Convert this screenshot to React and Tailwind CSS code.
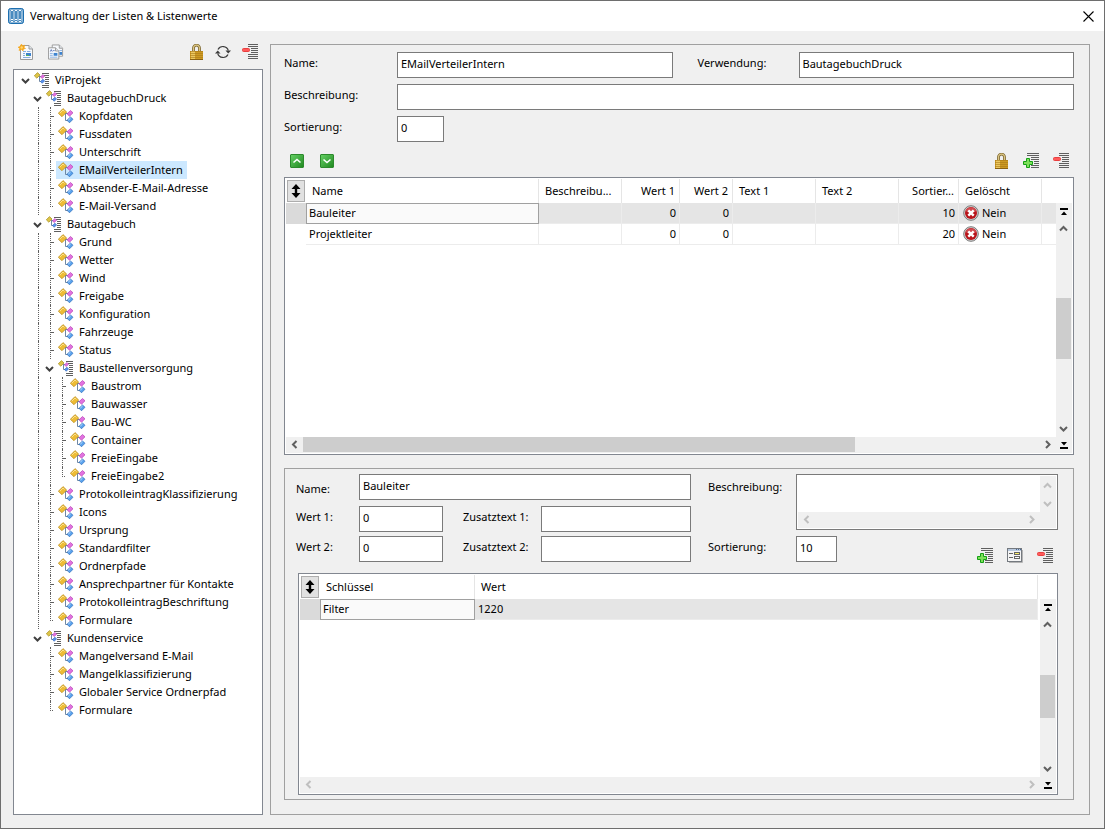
/**
 * App.jsx
 * Dialog "Verwaltung der Listen & Listenwerte": Baum links, Listendetails rechts.
 */

import { useState } from 'react';

const TREE = {
  label: 'ViProjekt',
  children: [
    {
      label: 'BautagebuchDruck',
      children: [
        { label: 'Kopfdaten' },
        { label: 'Fussdaten' },
        { label: 'Unterschrift' },
        { label: 'EMailVerteilerIntern' },
        { label: 'Absender-E-Mail-Adresse' },
        { label: 'E-Mail-Versand' },
      ],
    },
    {
      label: 'Bautagebuch',
      children: [
        { label: 'Grund' },
        { label: 'Wetter' },
        { label: 'Wind' },
        { label: 'Freigabe' },
        { label: 'Konfiguration' },
        { label: 'Fahrzeuge' },
        { label: 'Status' },
        {
          label: 'Baustellenversorgung',
          children: [
            { label: 'Baustrom' },
            { label: 'Bauwasser' },
            { label: 'Bau-WC' },
            { label: 'Container' },
            { label: 'FreieEingabe' },
            { label: 'FreieEingabe2' },
          ],
        },
        { label: 'ProtokolleintragKlassifizierung' },
        { label: 'Icons' },
        { label: 'Ursprung' },
        { label: 'Standardfilter' },
        { label: 'Ordnerpfade' },
        { label: 'Ansprechpartner für Kontakte' },
        { label: 'ProtokolleintragBeschriftung' },
        { label: 'Formulare' },
      ],
    },
    {
      label: 'Kundenservice',
      children: [
        { label: 'Mangelversand E-Mail' },
        { label: 'Mangelklassifizierung' },
        { label: 'Globaler Service Ordnerpfad' },
        { label: 'Formulare' },
      ],
    },
  ],
};

const COLUMNS = [
  { label: 'Name',          width: '' },
  { label: 'Beschreibu...', width: 'w-[83px]' },
  { label: 'Wert 1',        width: 'w-[58px]', right: true },
  { label: 'Wert 2',        width: 'w-[53px]', right: true },
  { label: 'Text 1',        width: 'w-[83px]' },
  { label: 'Text 2',        width: 'w-[83px]' },
  { label: 'Sortier...',    width: 'w-[60px]', right: true },
  { label: 'Gelöscht',      width: 'w-[83px]' },
];

const ROWS = [
  { name: 'Bauleiter',     wert1: 0, wert2: 0, sort: 10 },
  { name: 'Projektleiter', wert1: 0, wert2: 0, sort: 20 },
];

/* ── Icons ── */

function AppIcon() {
  return (
    <svg width="16" height="16" viewBox="0 0 16 16">
      <rect x="0.5" y="0.5" width="15" height="15" rx="2" fill="#1d6fb0" stroke="#1d6fb0" />
      <rect x="1.5" y="1.5" width="13" height="13" rx="1" fill="none" stroke="#ffffff" strokeWidth="0.5" />
      {[3, 7, 11].map(x => (
        <g key={x}>
          <rect x={x - 0.5} y="2" width="3" height="12" rx="1" fill="#ffffff" />
          <rect x={x + 0.2} y="3" width="1.6" height="8" fill="#1d6fb0" />
          <rect x={x + 0.2} y="12" width="1.6" height="1" fill="#1d6fb0" />
        </g>
      ))}
    </svg>
  );
}

function NewDocIcon() {
  return (
    <svg width="16" height="16" viewBox="0 0 16 16">
      <path d="M2.5 1.5H11L14.5 5V15.5H2.5Z" fill="#f7f9fc" stroke="#9a9a9a" />
      <path d="M11 1.5V5H14.5" fill="#dfe4ea" stroke="#9a9a9a" />
      <path d="M5 7.5H8M9 7.5H12.5M5 9.5H7M5 11.5H7M5 13.5H12.5" stroke="#86aede" />
      <rect x="8" y="9" width="5" height="3" fill="#3d83cf" />
      <rect x="8" y="11" width="3" height="1" fill="#59b259" />
      <path d="M3.5 0L4.5 2L6.8 1.2L6 3.5L7.5 4.5L5.5 5L5 7L3.5 5.5L1 6.5L1.8 4.3L0 3.2L2 2.5Z" fill="#f7a81c" stroke="#f7a81c" strokeWidth="0.6" />
      <circle cx="3.7" cy="3.5" r="1.2" fill="#ffd873" />
    </svg>
  );
}

function CopyDocIcon() {
  return (
    <svg width="17" height="16" viewBox="0 0 17 16">
      <path d="M4.5 0.5H12L15.5 4V12.5H4.5Z" fill="#f7f9fc" stroke="#9a9a9a" />
      <path d="M12 0.5V4H15.5" fill="#dfe4ea" stroke="#9a9a9a" />
      <rect x="12" y="6" width="3" height="1" fill="#86aede" />
      <rect x="12" y="8" width="3" height="3" fill="#3d83cf" />
      <path d="M0.5 3.5H8L11.5 7V15.5H0.5Z" fill="#f7f9fc" stroke="#9a9a9a" />
      <path d="M8 3.5V7H11.5" fill="#dfe4ea" stroke="#9a9a9a" />
      <path d="M2.5 7.5L3.5 5.5L4.5 7.5M5.5 6.5H7" fill="none" stroke="#4d6cb5" />
      <path d="M2 9.5H5M2 11.5H5M2 13.5H10" stroke="#86aede" />
      <rect x="6" y="9" width="4" height="3" fill="#3d83cf" />
    </svg>
  );
}

function LockIcon() {
  return (
    <svg width="16" height="16" viewBox="0 0 16 16">
      <path d="M5.5 8V4.3A3 3.2 0 0 1 11.5 4.3V8" fill="none" stroke="#7d672f" strokeWidth="2.8" />
      <path d="M5.5 8V4.3A3 3.2 0 0 1 11.5 4.3V8" fill="none" stroke="#dcc684" strokeWidth="1.2" />
      <rect x="2" y="7" width="13" height="9" fill="#cd9a22" />
      <rect x="3" y="7" width="4" height="9" fill="#ecc860" />
      <path d="M2 7.5H15M2 9.5H15M2 11.5H15M2 13.5H15" stroke="#a87718" strokeWidth="0.6" />
      <path d="M2 15.5H15" stroke="#8a6113" />
    </svg>
  );
}

function RefreshIcon() {
  return (
    <svg width="16" height="16" viewBox="0 0 16 16">
      <path d="M3 5.5A5.6 5.6 0 0 1 13.3 6.5M13 10.5A5.6 5.6 0 0 1 2.700 9.500" fill="none" stroke="#3c3c3c" strokeWidth="1.200" />
      <path d="M10.500 6.500H16L13.200 9.500Z" fill="#3c3c3c" />
      <path d="M0 9.500H5.500L2.800 6.500Z" fill="#3c3c3c" />
    </svg>
  );
}

function RemoveIcon() {
  return (
    <svg width="16" height="16" viewBox="0 0 16 16">
      <path
        d="M6 0.5H16M6 2.5H16M9 4.5H16M9 6.5H16M9 8.5H16M6 10.5H16M6 12.5H16M6 14.5H16"
        stroke="#5f5f5f"
      />
      <rect x="0.5" y="4.5" width="7" height="3" rx="1" fill="#ff5a5a" stroke="#e84040" />
    </svg>
  );
}

function AddIcon() {
  return (
    <svg width="16" height="16" viewBox="0 0 16 16">
      <path
        d="M4 0.5H16M4 2.5H16M8 4.5H16M8 6.5H16M11 8.5H16M11 10.5H16M8 12.5H16M8 14.5H16"
        stroke="#5f5f5f"
      />
      <path
        d="M3.5 5.5H6.5V8.5H9.5V11.5H6.5V14.5H3.5V11.5H0.5V8.5H3.5Z"
        fill="#7ee05a" stroke="#14a014" strokeLinejoin="round"
      />
    </svg>
  );
}

function FormIcon() {
  return (
    <svg width="16" height="16" viewBox="0 0 16 16">
      <path d="M2 14.5H15.5V2" fill="none" stroke="#b4b4b4" />
      <rect x="0.5" y="0.5" width="14" height="13" fill="#f5f5f5" stroke="#74797f" />
      <rect x="1" y="1" width="13" height="2" fill="#b9c9de" />
      <path d="M9 1.5H10M11 1.5H12M13 1.5H14" stroke="#4d6a94" />
      <path d="M2 5.5H6M2 9.5H6" stroke="#666" />
      <rect x="7.5" y="4.5" width="5" height="2" fill="#fff26b" stroke="#666" />
      <rect x="7.5" y="8.5" width="5" height="2" fill="#fff" stroke="#666" />
    </svg>
  );
}

function LeafIcon() {
  return (
    <svg width="16" height="16" viewBox="0 0 16 16">
      <path d="M7 5.5H10M7.5 5.5V12.5H10" fill="none" stroke="#6f87a3" />
      <path d="M0.3 5.3L5 0.6L8.7 4L4 8.7Z" fill="#eebc35" stroke="#b78a1c" strokeWidth="0.7" />
      <path d="M1.8 5.2L5 2L6.5 3.4" fill="none" stroke="#fbe38f" />
      <path d="M9 5.8L12.5 2.5L15 4.8L11.5 8.2Z" fill="#e272e0" stroke="#b440b4" strokeWidth="0.7" />
      <path d="M9 12.3L12.5 9L15 11.3L11.5 14.8Z" fill="#5aa3ee" stroke="#2767b8" strokeWidth="0.7" />
      <path d="M10.3 12.1L12.5 10.1" stroke="#bfe0ff" />
    </svg>
  );
}

function FolderIcon() {
  return (
    <svg width="16" height="16" viewBox="0 0 16 16">
      <path
        d="M8 1.5H15M10 3.5H15M11 5.5H15M11 7.5H15M11 9.5H15M11 11.5H15M8 13.5H15M8 15.5H15"
        stroke="#5f5f5f"
      />
      <path d="M5 4.5H7M5.5 4.5V9.5H7" fill="none" stroke="#6f87a3" />
      <path d="M0.3 3.8L3.5 0.6L6 3L2.8 6.2Z" fill="#dcc548" stroke="#a68d20" strokeWidth="0.7" />
      <path d="M6.5 4.8L9 2.5L10.6 4.2L8.2 6.6Z" fill="#e272e0" stroke="#b440b4" strokeWidth="0.6" />
      <path d="M6.5 9.5L9 7.2L10.6 8.9L8.2 11.3Z" fill="#5a8fee" stroke="#2767b8" strokeWidth="0.6" />
    </svg>
  );
}

function NoIcon() {
  return (
    <svg width="16" height="16" viewBox="0 0 16 16">
      <circle cx="8" cy="8" r="7.3" fill="#d4d4d4" stroke="#7a7a7a" />
      <circle cx="8" cy="8" r="6" fill="#b8141a" />
      <path d="M2.600 6A5.800 5.800 0 0 1 13.400 6Q8 9 2.600 6Z" fill="#d04a4f" />
      <path d="M5.3 5.3L10.7 10.7M10.7 5.3L5.3 10.7" stroke="#fff" strokeWidth="2.4" />
    </svg>
  );
}

const CHEVRON = {
  up:    'M1 6.5L4.5 3L8 6.5',
  down:  'M1 3L4.5 6.5L8 3',
  left:  'M6.5 1L3 4.5L6.5 8',
  right: 'M3 1L6.5 4.5L3 8',
};

function Chevron({ dir, color = '#606060' }) {
  return (
    <svg width="9" height="9" viewBox="0 0 9 9">
      <path d={CHEVRON[dir]} fill="none" stroke={color} strokeWidth="2" />
    </svg>
  );
}

function JumpIcon({ bottom }) {
  return (
    <svg width="8" height="8" viewBox="0 0 8 8">
      <path d={bottom ? 'M0 6H8V8H0ZM1 1H7L4 4.5Z' : 'M0 0H8V2H0ZM1 7H7L4 3.5Z'} fill="#000" />
    </svg>
  );
}

function SortIcon() {
  return (
    <svg width="10" height="14" viewBox="0 0 10 14">
      <path d="M5 0L9.5 5H6.2V9H9.5L5 14L0.5 9H3.8V5H0.5Z" fill="#000" />
    </svg>
  );
}

function IconButton({ label, children }) {
  return (
    <button type="button" aria-label={label} title={label} className="flex h-4 w-4 items-center justify-center">
      {children}
    </button>
  );
}

/* Grüner Knopf zum Verschieben der Zeilen */
function MoveButton({ label, d }) {
  return (
    <button
      type="button"
      aria-label={label}
      className="flex h-3.5 w-3.5 items-center justify-center rounded-[1px] border border-[#2c8a2c] bg-linear-to-br from-[#63d063] to-[#1f8a1f]"
    >
      <svg width="10" height="10" viewBox="0 0 10 10">
        <path d={d} fill="none" stroke="#fff" strokeWidth="1.6" />
      </svg>
    </button>
  );
}

/* ── Baum ── */

function TreeNode({ node, guides, last, selected, onSelect }) {
  const [open, setOpen] = useState(true);
  const isFolder = Boolean(node.children);
  const isActive = selected === node;
  // Wurzelknoten hat keine Linien
  const childGuides = guides === null ? [false] : [...guides, !last];

  return (
    <li>
      <div className="flex h-[18px]">
        {(guides ?? []).map((line, i) => (
          <span key={i} className="w-3 shrink-0 pl-[7px]">
            {line && <span className="block h-full border-l border-dotted border-[#606060]" />}
          </span>
        ))}
        {isFolder ? (
          <button
            type="button"
            onClick={() => setOpen(!open)}
            aria-label={open ? 'Zuklappen' : 'Aufklappen'}
            className="flex w-3 shrink-0 items-center justify-center"
          >
            <Chevron dir={open ? 'down' : 'right'} color="#404040" />
          </button>
        ) : (
          <span className="w-3 shrink-0 pr-0.5 pl-[7px]">
            <span
              className={`block border-l border-dotted border-[#606060] ${last ? 'h-2.5 border-b' : 'h-full'}`}
            >
              {!last && <span className="block h-2.5 border-b border-dotted border-[#606060]" />}
            </span>
          </span>
        )}
        <button
          type="button"
          onClick={() => onSelect(node)}
          className={`ml-px flex items-center gap-[5px] pr-1 pl-0.5 whitespace-nowrap ${isActive ? 'bg-[#cce8ff]' : ''}`}
        >
          {isFolder ? <FolderIcon /> : <LeafIcon />}
          {node.label}
        </button>
      </div>
      {isFolder && open && (
        <ul>
          {node.children.map((child, i) => (
            <TreeNode
              key={child.label}
              node={child}
              guides={childGuides}
              last={i === node.children.length - 1}
              selected={selected}
              onSelect={onSelect}
            />
          ))}
        </ul>
      )}
    </li>
  );
}

/* ── Felder ── */

function Label({ htmlFor, className = '', children }) {
  return (
    <label htmlFor={htmlFor} className={`flex h-[26px] items-center pb-1 ${className}`}>
      {children}
    </label>
  );
}

function TextInput({ id, value = '', className = '' }) {
  return (
    <input
      id={id}
      type="text"
      defaultValue={value}
      className={`h-[26px] min-w-0 border border-[#7a7a7a] bg-white px-[3px] pb-1 outline-none ${className}`}
    />
  );
}

/* ── Bildlaufleisten ── */

function VScroll() {
  return (
    <div className="flex w-4 shrink-0 flex-col bg-[#f0f0f0]">
      <div className="h-6 bg-white" />
      <button type="button" aria-label="Zum Anfang" className="flex h-[17px] items-center justify-center">
        <JumpIcon />
      </button>
      <button type="button" aria-label="Nach oben" className="flex h-[17px] items-center justify-center pr-0.5">
        <Chevron dir="up" />
      </button>
      <div className="flex flex-1 items-center">
        <div className="h-1/3 w-[15px] bg-[#cdcdcd]" />
      </div>
      <button type="button" aria-label="Nach unten" className="flex h-[17px] items-center justify-center pr-0.5">
        <Chevron dir="down" />
      </button>
      <button type="button" aria-label="Zum Ende" className="flex h-4 items-center justify-center">
        <JumpIcon bottom />
      </button>
    </div>
  );
}

function HScroll({ disabled }) {
  const color = disabled ? '#bfbfbf' : '#606060';
  return (
    <div className="flex h-4 shrink-0 bg-[#f0f0f0] pb-px">
      <button type="button" disabled={disabled} aria-label="Nach links" className="flex w-[17px] items-center justify-center">
        <Chevron dir="left" color={color} />
      </button>
      <div className="flex-1">
        {!disabled && <div className="h-full w-3/4 bg-[#cdcdcd]" />}
      </div>
      <button type="button" disabled={disabled} aria-label="Nach rechts" className="flex w-[17px] items-center justify-center">
        <Chevron dir="right" color={color} />
      </button>
    </div>
  );
}

/* Rahmen um eine Tabelle, mit beiden Bildlaufleisten */
function GridBox({ className, disabled, children }) {
  return (
    <div className={`flex border border-[#828790] bg-white p-px ${className}`}>
      <div className="flex min-w-0 flex-1 flex-col">
        <div className="min-h-0 flex-1 overflow-hidden">{children}</div>
        <HScroll disabled={disabled} />
      </div>
      <VScroll />
    </div>
  );
}

function CornerHead() {
  return (
    <th className="w-5 p-px">
      <button
        type="button"
        aria-label="Sortieren"
        className="flex h-[22px] w-[18px] items-center justify-center border border-[#adadad] bg-[#e1e1e1]"
      >
        <SortIcon />
      </button>
    </th>
  );
}

const TH = 'border-r border-[#e5e5e5] font-normal';
const TD = 'border-r border-b border-[#ececec]';
const FOCUS = 'bg-[#fafafa] outline outline-[#a0a0a0] -outline-offset-1';

function ValuesTable() {
  return (
    <table className="w-full table-fixed border-separate border-spacing-0">
      <thead>
        <tr className="h-6">
          <CornerHead />
          {COLUMNS.map(col => (
            <th
              key={col.label}
              className={`${TH} ${col.width} ${col.right ? 'pr-1 text-right' : 'pl-1.5 text-left'}`}
            >
              {col.label}
            </th>
          ))}
          <th className="w-3.5" />
        </tr>
      </thead>
      <tbody>
        {ROWS.map((row, i) => (
          <tr key={row.name} className={`h-[21px] ${i === 0 ? 'bg-[#e5e5e5]' : ''}`}>
            <td className={i === 0 ? 'bg-[#dadada]' : ''} />
            <td className={`${TD} pl-[3px] ${i === 0 ? FOCUS : ''}`}>{row.name}</td>
            <td className={TD} />
            <td className={`${TD} pr-[3px] text-right`}>{row.wert1}</td>
            <td className={`${TD} pr-[3px] text-right`}>{row.wert2}</td>
            <td className={TD} />
            <td className={TD} />
            <td className={`${TD} pr-[3px] text-right`}>{row.sort}</td>
            <td className={`${TD} pl-1`}>
              <span className="flex items-center gap-[3px]">
                <NoIcon />
                Nein
              </span>
            </td>
            <td className="border-b border-[#ececec]" />
          </tr>
        ))}
      </tbody>
    </table>
  );
}

function KeysTable() {
  return (
    <table className="w-full table-fixed border-separate border-spacing-0">
      <thead>
        <tr className="h-6">
          <CornerHead />
          <th className={`${TH} w-[155px] pl-1.5 text-left`}>Schlüssel</th>
          <th className={`${TH} pl-1.5 text-left`}>Wert</th>
          <th className="w-0.5" />
        </tr>
      </thead>
      <tbody>
        <tr className="h-[21px]">
          <td className="bg-[#dadada]" />
          <td className={`${TD} pl-[3px] ${FOCUS}`}>Filter</td>
          <td className={`${TD} bg-[#e5e5e5] pl-[3px]`}>1220</td>
          <td />
        </tr>
      </tbody>
    </table>
  );
}

function DetailPanel() {
  return (
    <section className="mt-[13px] border border-[#a0a0a0] pt-[5px] pr-[15px] pb-1 pl-[13px]">
      <div className="-ml-0.5 grid grid-cols-[63px_84px_98px_150px_105px_1fr] grid-rows-[26px_26px_37px] items-start">
        <Label htmlFor="d-name" className="mt-1">Name:</Label>
        <TextInput id="d-name" value="Bauleiter" className="col-span-3" />
        <Label htmlFor="d-beschreibung" className="mt-0.5 pl-[17px]">Beschreibung:</Label>
        <div className="row-span-2 flex h-14 border border-[#7a7a7a] bg-white p-px">
          <div className="flex min-w-0 flex-1 flex-col">
            <textarea id="d-beschreibung" className="min-h-0 w-full flex-1 resize-none outline-none" />
            <HScroll disabled />
          </div>
          <div className="flex w-4 flex-col items-center bg-[#f0f0f0] pr-0.5 pb-4">
            <button type="button" disabled aria-label="Nach oben" className="flex flex-1 items-center">
              <Chevron dir="up" color="#bfbfbf" />
            </button>
            <button type="button" disabled aria-label="Nach unten" className="flex flex-1 items-center">
              <Chevron dir="down" color="#bfbfbf" />
            </button>
          </div>
        </div>

        <Label htmlFor="d-wert1" className="mt-1.5">Wert 1:</Label>
        <TextInput id="d-wert1" value="0" className="mt-1.5" />
        <Label htmlFor="d-zusatz1" className="mt-1.5 pl-5">Zusatztext 1:</Label>
        <TextInput id="d-zusatz1" className="mt-1.5" />
        <span />

        <Label htmlFor="d-wert2" className="mt-2.5">Wert 2:</Label>
        <TextInput id="d-wert2" value="0" className="mt-2.5" />
        <Label htmlFor="d-zusatz2" className="mt-2.5 pl-5">Zusatztext 2:</Label>
        <TextInput id="d-zusatz2" className="mt-2.5" />
        <Label htmlFor="d-sortierung" className="mt-2.5 pl-[17px]">Sortierung:</Label>
        <div className="mt-2.5 flex justify-between">
          <TextInput id="d-sortierung" value="10" className="w-[41px]" />
          <div className="flex gap-3.5 pt-3 pr-[5px]">
            <IconButton label="Hinzufügen"><AddIcon /></IconButton>
            <IconButton label="Formular"><FormIcon /></IconButton>
            <IconButton label="Entfernen"><RemoveIcon /></IconButton>
          </div>
        </div>
      </div>

      <GridBox className="mt-2.5 h-[222px]" disabled>
        <KeysTable />
      </GridBox>
    </section>
  );
}

export default function App() {
  const [selected, setSelected] = useState(TREE.children[0].children[3]);

  return (
    <div className="flex min-h-screen flex-col border border-[#6e6e6e] bg-[#f0f0f0] font-['Noto_Sans','Open_Sans',sans-serif] text-[11px] leading-4 text-black">

      {/* ── Titelleiste ── */}
      <header className="flex h-[30px] items-center gap-1.5 bg-white pr-2.5 pl-[7px]">
        <AppIcon />
        <h1 className="flex-1">Verwaltung der Listen &amp; Listenwerte</h1>
        <button type="button" aria-label="Schließen">
          <svg width="11" height="11" viewBox="0 0 11 11">
            <path d="M0.5 0.5L10.5 10.5M10.5 0.5L0.5 10.5" stroke="#000" strokeWidth="1.1" />
          </svg>
        </button>
      </header>

      <main className="flex flex-1 gap-[7px] pt-[13px] pr-3.5 pb-[13px] pl-3">

        {/* ── Baum ── */}
        <aside className="flex w-[250px] shrink-0 flex-col">
          <div className="flex h-[25px] justify-between pr-[5px] pl-[5px]">
            <div className="flex gap-3.5">
              <IconButton label="Neue Liste"><NewDocIcon /></IconButton>
              <IconButton label="Liste kopieren"><CopyDocIcon /></IconButton>
            </div>
            <div className="flex gap-[11px]">
              <IconButton label="Sperren"><LockIcon /></IconButton>
              <IconButton label="Aktualisieren"><RefreshIcon /></IconButton>
              <IconButton label="Entfernen"><RemoveIcon /></IconButton>
            </div>
          </div>
          <nav className="flex-1 border border-[#828790] bg-white pt-px pl-[5px]">
            <ul>
              <TreeNode node={TREE} guides={null} last selected={selected} onSelect={setSelected} />
            </ul>
          </nav>
        </aside>

        {/* ── Details der Liste ── */}
        <div className="flex min-w-0 flex-1 flex-col border border-[#a0a0a0] pt-[7px] pr-[15px] pb-3.5 pl-[13px]">
          <div className="grid grid-cols-[113px_1fr_126px_1fr] gap-y-1.5">
            <Label htmlFor="name">Name:</Label>
            <TextInput id="name" value="EMailVerteilerIntern" />
            <Label htmlFor="verwendung" className="pl-[25px]">Verwendung:</Label>
            <TextInput id="verwendung" value="BautagebuchDruck" />
            <Label htmlFor="beschreibung">Beschreibung:</Label>
            <TextInput id="beschreibung" className="col-span-3" />
            <Label htmlFor="sortierung">Sortierung:</Label>
            <TextInput id="sortierung" value="0" className="w-[47px]" />
          </div>

          <div className="flex h-[35px] items-center justify-between pt-0.5 pr-[5px] pl-1.5">
            <div className="flex gap-4">
              <MoveButton label="Nach oben verschieben" d="M1.5 6.5L5 3.5L8.5 6.5" />
              <MoveButton label="Nach unten verschieben" d="M1.5 3.5L5 6.5L8.5 3.5" />
            </div>
            <div className="flex gap-3.5">
              <IconButton label="Sperren"><LockIcon /></IconButton>
              <IconButton label="Hinzufügen"><AddIcon /></IconButton>
              <IconButton label="Entfernen"><RemoveIcon /></IconButton>
            </div>
          </div>

          <GridBox className="min-h-[180px] flex-1">
            <ValuesTable />
          </GridBox>

          <DetailPanel />
        </div>
      </main>
    </div>
  );
}
